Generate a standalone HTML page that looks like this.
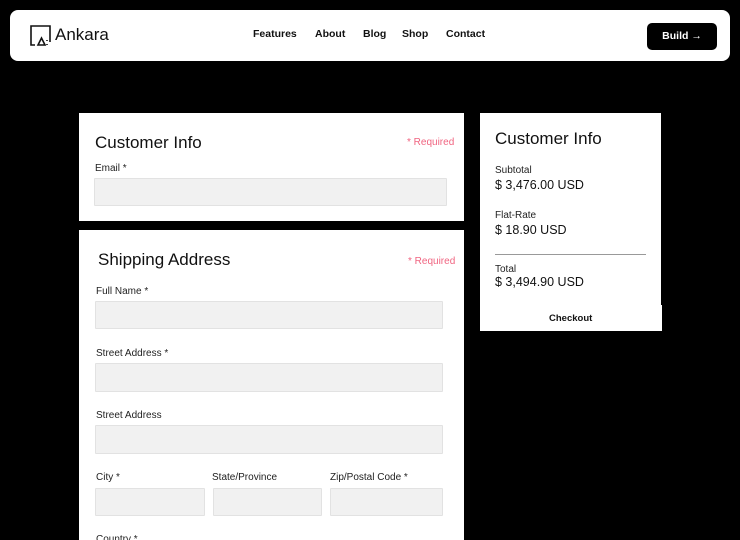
<!DOCTYPE html>
<html><head><meta charset="utf-8"><style>
*{margin:0;padding:0;box-sizing:border-box}
html,body{width:740px;height:540px;overflow:hidden}
body{background:#000;position:relative;font-family:"Liberation Sans",sans-serif;color:#111}
.a{position:absolute}
.nav{left:10px;top:10px;width:720px;height:51px;background:#fff;border-radius:8px}
.nl{font-size:10.5px;font-weight:bold;top:28px}
.w{background:#fff}
.in{background:#f1f1f1;border:1px solid #e2e2e2;border-radius:1px}
.lb{font-size:10px;color:#222}
.req{font-size:10px;color:#f06480}
.h{font-size:17px;color:#111}
</style></head><body>
<div class="a nav"></div>
<svg class="a" style="left:30px;top:25px" width="22" height="22" viewBox="0 0 22 22" fill="none" stroke="#111" stroke-width="1.6"><path d="M5 20H1V1H20V17"/><path d="M8 20L11.5 13L15 20Z"/><path d="M17 19v1M17 15v1"/></svg>
<div class="a" style="left:55px;top:25px;font-size:17px;color:#111">Ankara</div>
<div class="a nl" style="left:253px">Features</div>
<div class="a nl" style="left:315px">About</div>
<div class="a nl" style="left:363px">Blog</div>
<div class="a nl" style="left:402px">Shop</div>
<div class="a nl" style="left:446px">Contact</div>
<div class="a" style="left:647px;top:23px;width:70px;height:27px;background:#000;border-radius:5px;color:#fff;font-size:10.5px;font-weight:bold;text-align:center;line-height:26px">Build →</div>

<div class="a w" style="left:79px;top:113px;width:385px;height:108px"></div>
<div class="a h" style="left:95px;top:133px">Customer Info</div>
<div class="a req" style="left:407px;top:137px">* Required</div>
<div class="a lb" style="left:95px;top:163px">Email *</div>
<div class="a in" style="left:94px;top:178px;width:353px;height:28px"></div>

<div class="a w" style="left:79px;top:230px;width:385px;height:320px"></div>
<div class="a h" style="left:98px;top:250px">Shipping Address</div>
<div class="a req" style="left:408px;top:256px">* Required</div>
<div class="a lb" style="left:96px;top:286px">Full Name *</div>
<div class="a in" style="left:95px;top:301px;width:348px;height:28px"></div>
<div class="a lb" style="left:96px;top:348px">Street Address *</div>
<div class="a in" style="left:95px;top:363px;width:348px;height:29px"></div>
<div class="a lb" style="left:96px;top:410px">Street Address</div>
<div class="a in" style="left:95px;top:425px;width:348px;height:29px"></div>
<div class="a lb" style="left:96px;top:472px">City *</div>
<div class="a lb" style="left:212px;top:472px">State/Province</div>
<div class="a lb" style="left:330px;top:472px">Zip/Postal Code *</div>
<div class="a in" style="left:95px;top:488px;width:110px;height:28px"></div>
<div class="a in" style="left:213px;top:488px;width:109px;height:28px"></div>
<div class="a in" style="left:330px;top:488px;width:113px;height:28px"></div>
<div class="a lb" style="left:96px;top:534px">Country *</div>

<div class="a w" style="left:480px;top:113px;width:181px;height:217px"></div>
<div class="a w" style="left:480px;top:305px;width:182px;height:26px"></div>
<div class="a h" style="left:495px;top:129px">Customer Info</div>
<div class="a lb" style="left:495px;top:165px">Subtotal</div>
<div class="a" style="left:495px;top:178px;font-size:12.5px">$ 3,476.00 USD</div>
<div class="a lb" style="left:495px;top:210px">Flat-Rate</div>
<div class="a" style="left:495px;top:223px;font-size:12.5px">$ 18.90 USD</div>
<div class="a" style="left:495px;top:254px;width:151px;height:1px;background:#999"></div>
<div class="a lb" style="left:495px;top:264px">Total</div>
<div class="a" style="left:495px;top:275px;font-size:12.5px">$ 3,494.90 USD</div>
<div class="a" style="left:549px;top:313px;font-size:9.5px;font-weight:bold">Checkout</div>
</body></html>
